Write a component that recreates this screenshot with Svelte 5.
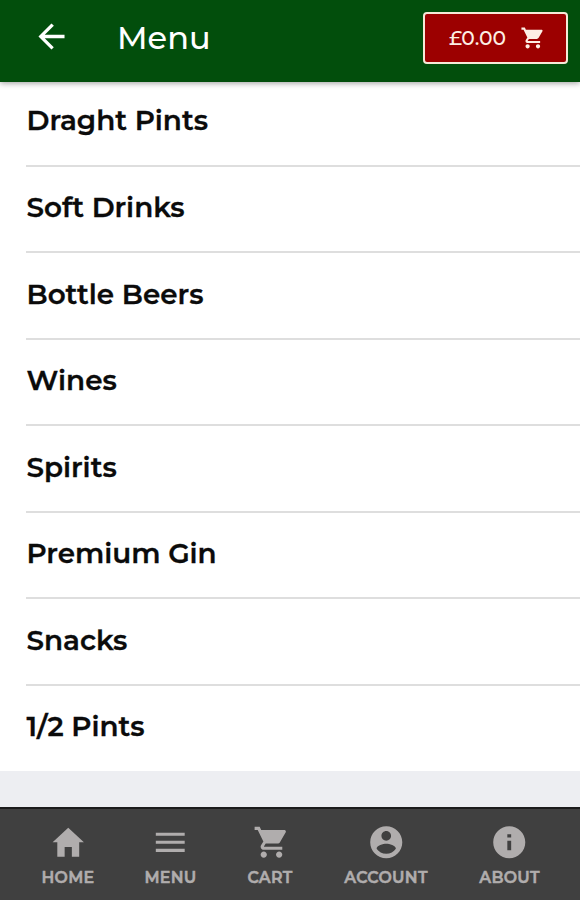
<script lang="ts">
	interface Tab {
		label: string;
		width: number;
		viewBox: string;
		icon: string;
	}

	const cartIcon =
		'M169.6 377.6c-22.882 0-41.6 18.718-41.6 41.601 0 22.882 18.718 41.6 41.6 41.6s41.601-18.718 41.601-41.6c-.001-22.884-18.72-41.601-41.601-41.601zM48 51.2v41.6h41.6l74.883 151.682-31.308 50.954c-3.118 5.2-5.2 12.482-5.2 19.765 0 27.85 19.025 41.6 44.825 41.6H416v-40H177.893c-3.118 0-5.2-2.082-5.2-5.2 0-1.036 2.207-5.2 2.207-5.2l20.782-32.8h154.954c15.601 0 29.128-8.317 36.4-21.836l74.882-128.8c1.237-2.461 2.082-6.246 2.082-10.4 0-11.446-9.364-19.765-20.8-19.765H135.364L115.6 51.2H48zm326.399 326.4c-22.882 0-41.6 18.718-41.6 41.601 0 22.882 18.718 41.6 41.6 41.6S416 442.082 416 419.2c0-22.883-18.719-41.6-41.601-41.6z';

	const categories = [
		'Draght Pints',
		'Soft Drinks',
		'Bottle Beers',
		'Wines',
		'Spirits',
		'Premium Gin',
		'Snacks',
		'1/2 Pints'
	];

	const tabs: Tab[] = [
		{
			label: 'Home',
			width: 52,
			viewBox: '0 0 512 512',
			icon: 'M208 448V320h96v128h97.6V256H464L256 64 48 256h62.4v192z'
		},
		{
			label: 'Menu',
			width: 52,
			viewBox: '0 0 512 512',
			icon: 'M64 384h384v-42.666H64V384zm0-106.666h384v-42.667H64v42.667zM64 128v42.665h384V128H64z'
		},
		{ label: 'Cart', width: 46, viewBox: '0 0 512 512', icon: cartIcon },
		{
			label: 'Account',
			width: 85,
			viewBox: '0 0 24 24',
			icon: 'M12 2C6.48 2 2 6.48 2 12s4.48 10 10 10 10-4.48 10-10S17.52 2 12 2zm0 3c1.66 0 3 1.34 3 3s-1.34 3-3 3-3-1.34-3-3 1.34-3 3-3zm0 14.2c-2.5 0-4.71-1.28-6-3.22.03-1.99 4-3.08 6-3.08 1.99 0 5.97 1.09 6 3.08-1.29 1.94-3.5 3.22-6 3.22z'
		},
		{
			label: 'About',
			width: 61,
			viewBox: '0 0 24 24',
			icon: 'M12 2C6.48 2 2 6.48 2 12s4.48 10 10 10 10-4.48 10-10S17.52 2 12 2zm1.2 15h-2.4v-6h2.4v6zm0-8h-2.4V7h2.4v2z'
		}
	];

	let total = $state(0);
</script>

<div class="app">
	<header class="toolbar">
		<button class="back" aria-label="Back">
			<svg viewBox="0 0 512 512">
				<path d="M427 234.625H167.296l119.702-119.702L256 85 85 256l171 171 29.922-29.924-118.626-119.701H427v-42.75z" />
			</svg>
		</button>
		<h1>Menu</h1>
		<button class="basket">
			<span>£{total.toFixed(2)}</span>
			<svg viewBox="0 0 512 512"><path d={cartIcon} /></svg>
		</button>
	</header>

	<main>
		<ul class="list">
			{#each categories as category}
				<li>{category}</li>
			{/each}
		</ul>
	</main>

	<nav class="tabs">
		{#each tabs as tab}
			<button class="tab" style="width: {tab.width}px">
				<svg viewBox={tab.viewBox}><path d={tab.icon} /></svg>
				<span>{tab.label}</span>
			</button>
		{/each}
	</nav>
</div>

<style>
	:global(body) {
		margin: 0;
	}

	.app {
		display: flex;
		flex-direction: column;
		width: 580px;
		height: 900px;
		overflow: hidden;
		background: #edeef2;
		font-family: Montserrat, Inter, sans-serif;
	}

	button {
		padding: 0;
		border: 0;
		background: none;
		color: inherit;
		font: inherit;
	}

	svg {
		display: block;
		flex: none;
		fill: currentColor;
	}

	.toolbar {
		display: flex;
		align-items: center;
		box-sizing: border-box;
		height: 81.5px;
		padding: 0 12px 6px 32px;
		background: #024e0c;
		color: #fff;
		box-shadow: 0 1px 6px rgba(0, 0, 0, 0.4);
		z-index: 1;
	}

	.back svg {
		width: 39px;
		height: 39px;
		margin-bottom: 2px;
	}

	h1 {
		flex: 1;
		margin: 0 0 0 46px;
		font-size: 32px;
		font-weight: 500;
		line-height: 40px;
	}

	.basket {
		display: flex;
		align-items: center;
		box-sizing: border-box;
		width: 145px;
		height: 52px;
		padding-left: 24px;
		border: 2px solid #f7e9d8;
		border-radius: 4px;
		background: #9c0000;
		color: #fdeee4;
		font-size: 20.3px;
		font-weight: 500;
	}

	.basket span {
		width: 70px;
		text-align: left;
	}

	.basket svg {
		width: 26px;
		height: 26px;
	}

	main {
		flex: 1;
	}

	.list {
		margin: 0;
		padding: 0 0 0 26px;
		list-style: none;
		background: #fff;
	}

	li {
		display: flex;
		align-items: center;
		box-sizing: border-box;
		height: 86.5px;
		padding: 0 0 3px 0.5px;
		border-bottom: 2px solid #dedede;
		color: #0b0b0b;
		font-size: 27.8px;
		font-weight: 600;
		-webkit-text-stroke: 0.3px currentColor;
	}

	li:first-child {
		height: 85px;
		padding-bottom: 6px;
	}

	li:last-child {
		height: 85.5px;
		padding-bottom: 4px;
		border-bottom: 0;
	}

	.tabs {
		display: flex;
		justify-content: space-between;
		box-sizing: border-box;
		height: 93px;
		padding: 14px 40px 0 42px;
		border-top: 2px solid #1c1c1c;
		background: #404040;
		color: #b0adad;
	}

	.tab {
		display: flex;
		flex-direction: column;
		align-items: center;
	}

	.tab svg {
		width: 38.5px;
		height: 38.5px;
	}

	.tab span {
		margin-top: 6px;
		font-size: 15.8px;
		font-weight: 600;
		line-height: 20px;
		letter-spacing: 0.3px;
		text-transform: uppercase;
		-webkit-text-stroke: 0.5px currentColor;
	}
</style>
